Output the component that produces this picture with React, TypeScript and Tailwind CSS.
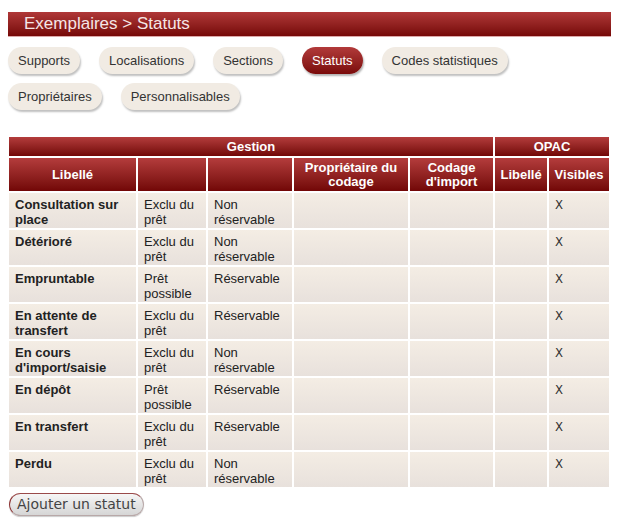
import React from "react";

type Row = {
  label: string;
  pret: string;
  resa: string;
  visible: boolean;
};

const rows: Row[] = [
  { label: "Consultation sur place", pret: "Exclu du prêt", resa: "Non réservable", visible: true },
  { label: "Détérioré", pret: "Exclu du prêt", resa: "Non réservable", visible: true },
  { label: "Empruntable", pret: "Prêt possible", resa: "Réservable", visible: true },
  { label: "En attente de transfert", pret: "Exclu du prêt", resa: "Réservable", visible: true },
  { label: "En cours d'import/saisie", pret: "Exclu du prêt", resa: "Non réservable", visible: true },
  { label: "En dépôt", pret: "Prêt possible", resa: "Réservable", visible: true },
  { label: "En transfert", pret: "Exclu du prêt", resa: "Réservable", visible: true },
  { label: "Perdu", pret: "Exclu du prêt", resa: "Non réservable", visible: true },
];

const tabsRow1 = ["Supports", "Localisations", "Sections", "Statuts", "Codes statistiques"];
const tabsRow2 = ["Propriétaires", "Personnalisables"];

const Tab = ({ label, active }: { label: string; active?: boolean }) => (
  <span
    className={
      active
        ? "inline-flex h-[27px] items-center rounded-full bg-gradient-to-b from-[#b23a3a] to-[#7a0a0a] px-[10px] text-[13px] text-white shadow-[1px_2px_2px_rgba(0,0,0,0.3)]"
        : "inline-flex h-[27px] items-center rounded-full bg-[#f1ebe3] px-[10px] text-[13px] text-[#333] shadow-[1px_2px_2px_rgba(0,0,0,0.25)]"
    }
  >
    {label}
  </span>
);

const th =
  "bg-gradient-to-b from-[#b43c3c] to-[#720606] text-white font-bold text-[13px] leading-[14px] text-center align-middle px-1";
const td =
  "bg-gradient-to-b from-[#f4ede4] to-[#e8e1dc] text-[13px] leading-[15px] text-[#222] align-top pt-[4px] px-[6px] h-[35px]";

const App = () => {
  return (
    <div className="w-[630px] h-[524px] bg-white font-['Liberation_Sans',Arial,sans-serif] pt-[12px] px-[8px]">
      <div className="w-[603px] h-[25px] bg-gradient-to-b from-[#b03838] to-[#760707] border-b border-[#dca8a8] pl-[16px] flex items-center text-[17px] text-[#f5e6e6]">
        Exemplaires &gt; Statuts
      </div>

      <div className="mt-[10px] flex flex-col gap-[9px]">
        <div className="flex gap-[19px]">
          {tabsRow1.map((t) => (
            <Tab key={t} label={t} active={t === "Statuts"} />
          ))}
        </div>
        <div className="flex gap-[19px]">
          {tabsRow2.map((t) => (
            <Tab key={t} label={t} />
          ))}
        </div>
      </div>

      <table className="mt-[25px] -ml-[1px] table-fixed border-separate border-spacing-[2px] w-[604px]">
        <colgroup>
          <col className="w-[127px]" />
          <col className="w-[68px]" />
          <col className="w-[84px]" />
          <col className="w-[114px]" />
          <col className="w-[83px]" />
          <col className="w-[52px]" />
          <col className="w-[60px]" />
        </colgroup>
        <thead>
          <tr>
            <th colSpan={5} className={th + " h-[19px]"}>
              Gestion
            </th>
            <th colSpan={2} className={th + " h-[19px]"}>
              OPAC
            </th>
          </tr>
          <tr>
            <th className={th + " h-[33px]"}>Libellé</th>
            <th className={th}></th>
            <th className={th}></th>
            <th className={th}>Propriétaire du codage</th>
            <th className={th}>Codage d'import</th>
            <th className={th}>Libellé</th>
            <th className={th}>Visibles</th>
          </tr>
        </thead>
        <tbody>
          {rows.map((r) => (
            <tr key={r.label}>
              <td className={td + " font-bold"}>{r.label}</td>
              <td className={td}>{r.pret}</td>
              <td className={td}>{r.resa}</td>
              <td className={td}></td>
              <td className={td}></td>
              <td className={td}></td>
              <td className={td + " font-['DejaVu_Sans_Condensed','DejaVu_Sans',sans-serif] text-[12px] text-[#333]"}>
                {r.visible ? "X" : ""}
              </td>
            </tr>
          ))}
        </tbody>
      </table>

      <button className="mt-[4px] ml-px h-[23px] rounded-full border border-[#b8a8a8] border-l-[#8a3030] border-t-[#9a4a4a] bg-gradient-to-b from-[#f6f6f6] to-[#d6d6d6] px-[7px] font-['DejaVu_Sans',sans-serif] text-[14px] text-[#444] shadow-[0_1px_1px_rgba(0,0,0,0.2)]">
        Ajouter un statut
      </button>
    </div>
  );
};

export default App;
